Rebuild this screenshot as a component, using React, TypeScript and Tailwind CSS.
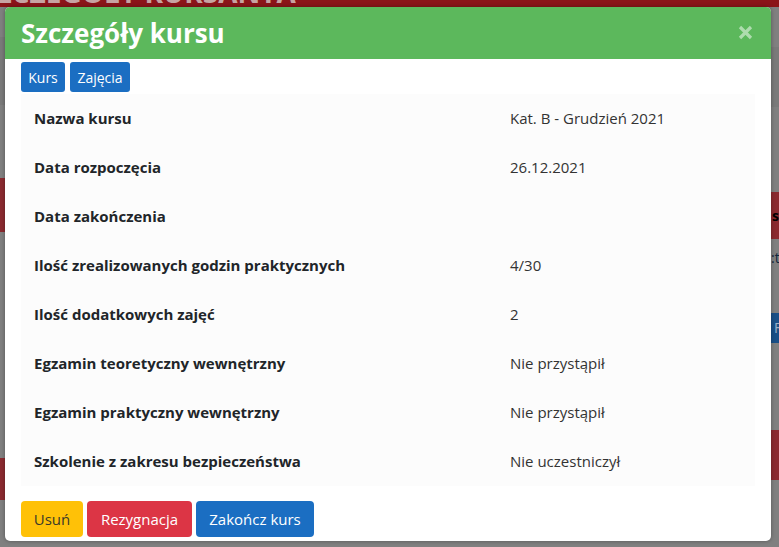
import React from "react";

const rows: [string, string][] = [
  ["Nazwa kursu", "Kat. B - Grudzień 2021"],
  ["Data rozpoczęcia", "26.12.2021"],
  ["Data zakończenia", ""],
  ["Ilość zrealizowanych godzin praktycznych", "4/30"],
  ["Ilość dodatkowych zajęć", "2"],
  ["Egzamin teoretyczny wewnętrzny", "Nie przystąpił"],
  ["Egzamin praktyczny wewnętrzny", "Nie przystąpił"],
  ["Szkolenie z zakresu bezpieczeństwa", "Nie uczestniczył"],
];

export default function App() {
  return (
    <div
      className="relative h-[547px] w-[779px] overflow-hidden bg-[#808080]"
      style={{ fontFamily: '"Open Sans", "Noto Sans", sans-serif' }}
    >
      {/* dimmed page behind */}
      <div className="flex h-full flex-col">
        <div className="h-[7px] overflow-hidden bg-[#8b1419]">
          <div className="-ml-[20px] -mt-[22px] whitespace-nowrap text-[28px] font-bold leading-[28px] text-[#c7a3a3]">
            SZCZEGÓŁY KURSANTA
          </div>
        </div>
        <div className="flex flex-1">
          <div className="flex w-[5px] flex-col">
            <div className="h-[30px] bg-[#808080]" />
            <div className="h-[68px] bg-[#7a7a7a]" />
            <div className="h-[73px] bg-[#808080]" />
            <div className="h-[54px] bg-[#8b2a30]" />
            <div className="h-[226px] bg-[#808080]" />
            <div className="h-[42px] bg-[#8b2a30]" />
            <div className="flex-1 bg-[#808080]" />
          </div>
          <div className="flex-1" />
          <div className="flex w-[8px] flex-col">
            <div className="h-[40px] bg-[#808080]" />
            <div className="h-[60px] bg-[#7a7a7a]" />
            <div className="h-[85px] bg-[#808080]" />
            <div className="flex h-[47px] items-center overflow-hidden bg-[#8b2a30] pl-[1px] text-[14px] font-bold leading-none text-black">
              s
            </div>
            <div className="flex h-[74px] items-start overflow-hidden bg-[#808080] pt-[12px] text-[14px] leading-none text-[#10253d]">
              :t
            </div>
            <div className="flex h-[30px] items-center overflow-hidden bg-[#1a4f87] pl-[3px] text-[14px] leading-none text-[#9bb0c8]">
              F
            </div>
            <div className="h-[87px] bg-[#808080]" />
            <div className="h-[50px] bg-[#8b2a30]" />
            <div className="flex-1 bg-[#808080]" />
          </div>
        </div>
      </div>

      {/* modal */}
      <div className="absolute left-[5px] top-[7px] flex h-[534px] w-[766px] flex-col overflow-hidden rounded-[5px] bg-white shadow-[0_0_4px_rgba(0,0,0,0.35)]">
        <div className="flex h-[52px] shrink-0 items-center justify-between bg-[#5cb85c] pl-[16px] pr-[18px]">
          <div className="text-[26px] font-bold leading-none text-white">Szczegóły kursu</div>
          <svg width="15" height="15" viewBox="0 0 15 15" className="mt-[-2px]">
            <path d="M2 2 L13 13 M13 2 L2 13" stroke="#aedcae" strokeWidth="3.2" strokeLinecap="butt" />
          </svg>
        </div>
        <div className="flex flex-1 flex-col px-[16px] pb-[4px]">
          <div className="mt-[3px] flex gap-[5px]">
            <div className="flex h-[30px] w-[44px] items-center justify-center rounded-[3px] bg-[#1b6ec2] text-[14px] text-white">
              Kurs
            </div>
            <div className="flex h-[30px] w-[60px] items-center justify-center rounded-[3px] bg-[#1b6ec2] text-[14px] text-white">
              Zajęcia
            </div>
          </div>
          <div className="mt-[2px] flex flex-col bg-[#fcfcfc]">
            {rows.map(([k, v]) => (
              <div key={k} className="flex h-[49px] items-center text-[15px] text-[#212529]">
                <div className="w-[476px] pl-[13px] font-bold">{k}</div>
                <div className="pl-[13px] text-[#333]">{v}</div>
              </div>
            ))}
          </div>
          <div className="mt-auto flex gap-[4px]">
            <div className="flex h-[36px] w-[62px] items-center justify-center rounded-[4px] bg-[#ffc107] text-[15px] text-[#3a3a2a]">
              Usuń
            </div>
            <div className="flex h-[36px] w-[105px] items-center justify-center rounded-[4px] bg-[#dc3545] text-[15px] text-white">
              Rezygnacja
            </div>
            <div className="flex h-[36px] w-[118px] items-center justify-center rounded-[4px] bg-[#1b6ec2] text-[15px] text-white">
              Zakończ kurs
            </div>
          </div>
        </div>
      </div>
    </div>
  );
}
